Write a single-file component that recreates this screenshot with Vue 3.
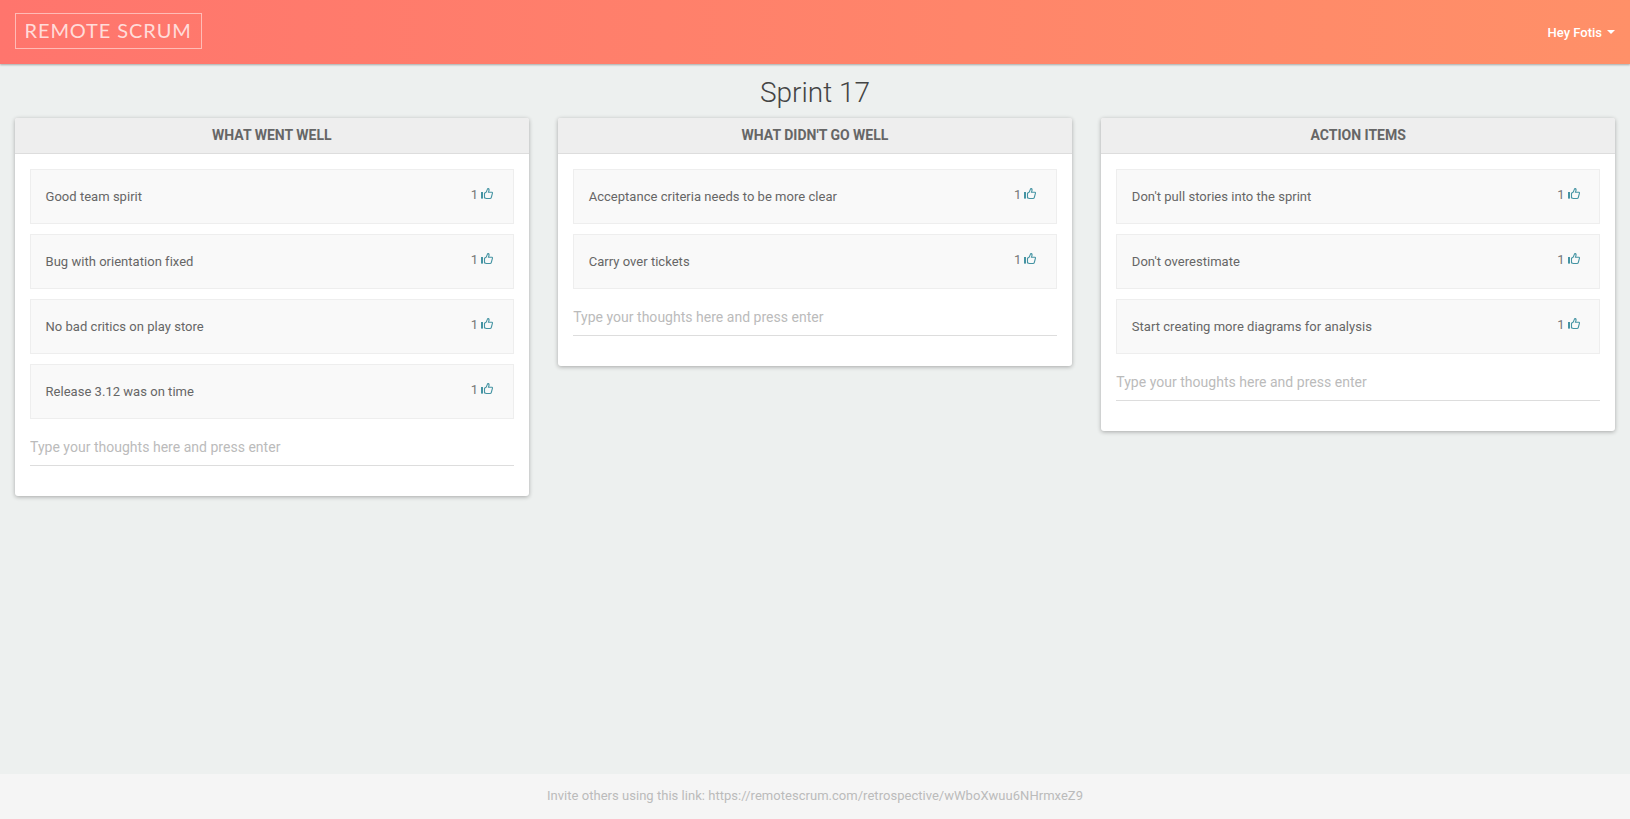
<script setup>
import { reactive } from 'vue'

const boardName = 'Sprint 17'
const inviteLink = 'https://remotescrum.com/retrospective/wWboXwuu6NHrmxeZ9'

const columns = reactive([
  {
    title: 'What went well',
    draft: '',
    items: [
      { text: 'Good team spirit', votes: 1 },
      { text: 'Bug with orientation fixed', votes: 1 },
      { text: 'No bad critics on play store', votes: 1 },
      { text: 'Release 3.12 was on time', votes: 1 }
    ]
  },
  {
    title: "What didn't go well",
    draft: '',
    items: [
      { text: 'Acceptance criteria needs to be more clear', votes: 1 },
      { text: 'Carry over tickets', votes: 1 }
    ]
  },
  {
    title: 'Action items',
    draft: '',
    items: [
      { text: "Don't pull stories into the sprint", votes: 1 },
      { text: "Don't overestimate", votes: 1 },
      { text: 'Start creating more diagrams for analysis', votes: 1 }
    ]
  }
])

const addItem = (column) => {
  const text = column.draft.trim()
  if (!text) return
  column.items.push({ text, votes: 0 })
  column.draft = ''
}
</script>

<template>
  <div class="page">
    <header class="navbar">
      <a class="brand"><span>REMOTE SCRUM</span></a>
      <a class="user-menu">Hey Fotis <i class="caret"></i></a>
    </header>

    <main class="board">
      <h2 class="board-title">{{ boardName }}</h2>
      <div class="columns">
        <section v-for="column in columns" :key="column.title" class="panel">
          <div class="panel-heading">{{ column.title }}</div>
          <div class="panel-body">
            <div v-for="item in column.items" :key="item.text" class="item">
              <span class="item-text">{{ item.text }}</span>
              <a class="votes" @click="item.votes++">
                {{ item.votes }}
                <svg class="thumb" viewBox="0 0 12 12">
                  <rect x="0" y="4" width="2" height="6.6" fill="currentColor" />
                  <path
                    d="M3.5 5.2 L5.4 3.9 L6.3 1.4 Q6.6 .5 7.3 .6 Q8.3 .9 8 2.3 L7.5 4.2 H10.9 Q11.7 4.4 11.4 5.4 L10.3 9.5 Q10 10.5 9 10.5 H5.3 L3.5 9.8 Z"
                    fill="none"
                    stroke="currentColor"
                    stroke-width="1.1"
                  />
                </svg>
              </a>
            </div>
            <input
              v-model="column.draft"
              class="thought-input"
              type="text"
              placeholder="Type your thoughts here and press enter"
              @keyup.enter="addItem(column)"
            />
          </div>
        </section>
      </div>
    </main>

    <footer class="footer">Invite others using this link: {{ inviteLink }}</footer>
  </div>
</template>

<style>
body {
  margin: 0;
  background: #edf0ef;
}
</style>

<style scoped>
.page {
  display: flex;
  flex-direction: column;
  min-height: 100vh;
  font-family: Roboto, "Liberation Sans", sans-serif;
  font-size: 13px;
  line-height: 1.846;
  color: #666;
}

.page * {
  box-sizing: border-box;
}

.navbar {
  display: flex;
  align-items: center;
  justify-content: space-between;
  height: 64px;
  padding: 0 15px;
  background: linear-gradient(to right, #ff756d 0%, #ff9068 100%);
  box-shadow: 0 1px 2px rgba(0, 0, 0, 0.3);
}

.brand {
  display: flex;
  align-items: center;
  width: 187px;
  height: 36px;
  margin-top: -2px;
  padding: 0 0 2px 8.5px;
  border: 1px solid rgba(255, 255, 255, 0.5);
  color: rgba(255, 255, 255, 0.75);
  font-family: Lato, sans-serif;
  font-size: 20px;
  font-weight: 400;
  letter-spacing: 0.9px;
  white-space: nowrap;
}

.user-menu {
  display: flex;
  align-items: center;
  gap: 5px;
  padding-top: 1px;
  color: #fff;
  font-weight: 500;
}

.caret {
  border-top: 4px solid #fff;
  border-left: 4px solid transparent;
  border-right: 4px solid transparent;
}

.board {
  flex: 1;
}

.board-title {
  height: 54px;
  margin: 0;
  color: #444;
  font-size: 28px;
  font-weight: 300;
  line-height: 58px;
  text-align: center;
}

.columns {
  display: grid;
  grid-template-columns: repeat(3, 1fr);
  align-items: start;
  gap: 29.5px;
  padding: 0 15px;
}

.panel {
  background: #fff;
  border-radius: 3px;
  box-shadow: 0 1px 4px rgba(0, 0, 0, 0.3);
}

.panel-heading {
  height: 36px;
  border-bottom: 1px solid #ddd;
  border-radius: 2px 2px 0 0;
  background: #eee;
  font-size: 14px;
  font-weight: 700;
  line-height: 35px;
  text-align: center;
  text-transform: uppercase;
}

.panel-body {
  padding: 15px 15px 30px;
}

.item {
  display: flex;
  align-items: center;
  justify-content: space-between;
  height: 55px;
  margin-bottom: 10px;
  padding: 0 19.5px 0 14.5px;
  border: 1px solid #eee;
  background: #f9f9f9;
}

.item-text {
  letter-spacing: 0.03px;
}

.votes {
  display: flex;
  align-items: center;
  gap: 3px;
  margin-top: -4px;
  color: #777;
  cursor: pointer;
}

.thumb {
  width: 12px;
  height: 12px;
  color: #4594a3;
}

.thought-input {
  display: block;
  width: 100%;
  height: 37px;
  padding: 0;
  border: 0;
  border-bottom: 1px solid #ddd;
  outline: 0;
  background: transparent;
  color: #666;
  font-family: inherit;
  font-size: 14px;
  letter-spacing: 0.02px;
}

.thought-input::placeholder {
  color: #bbb;
}

.footer {
  height: 45px;
  background: #f5f5f5;
  color: #bbb;
  letter-spacing: 0.03px;
  line-height: 44px;
  text-align: center;
}
</style>
